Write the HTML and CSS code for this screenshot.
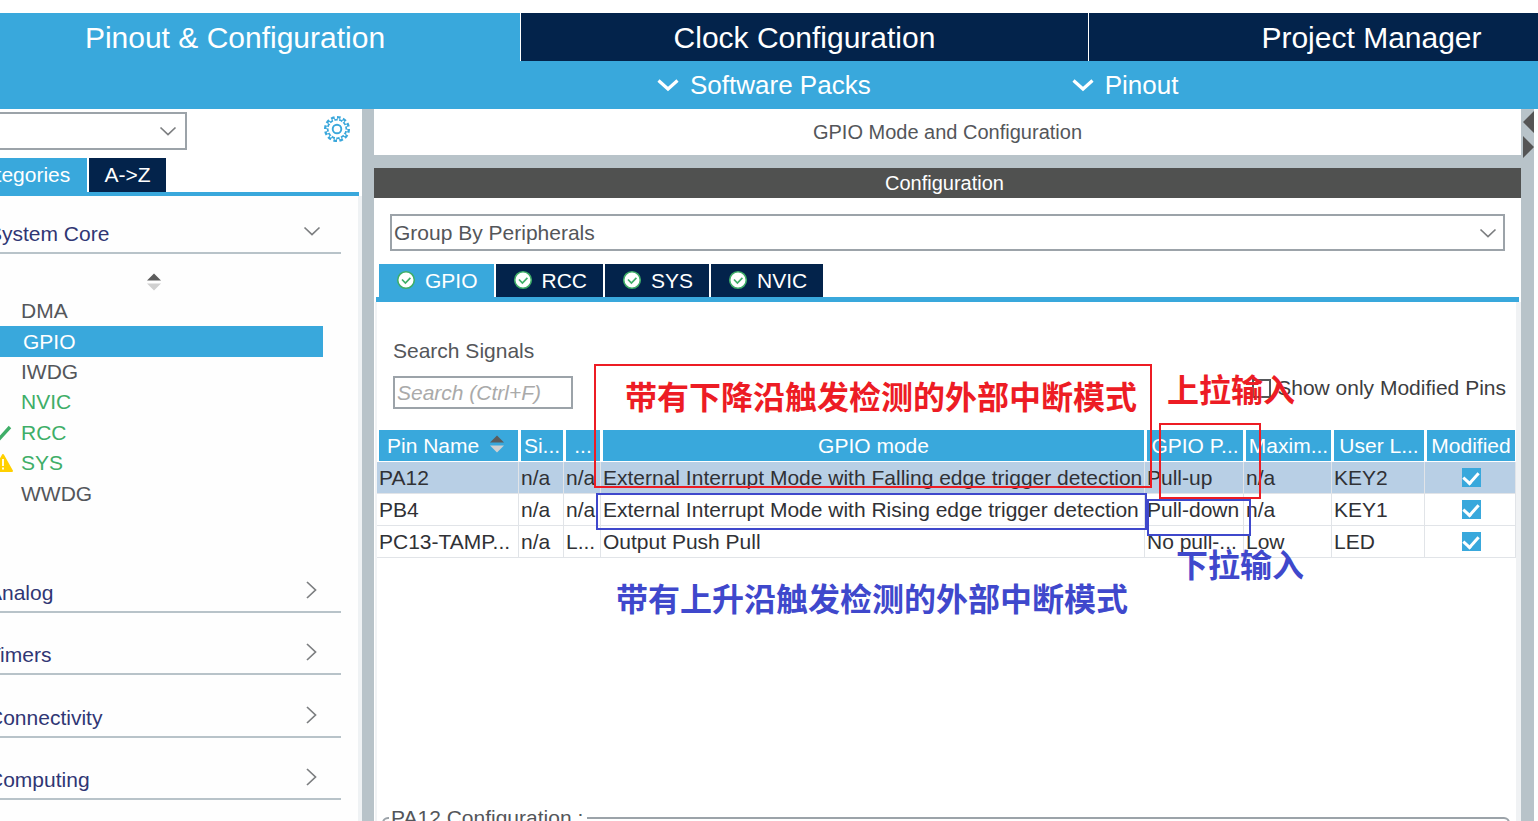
FILE: index.html
```html
<!DOCTYPE html>
<html lang="en">
<head>
<meta charset="utf-8">
<title>Pinout &amp; Configuration</title>
<link rel="stylesheet" href="styles.css">
</head>
<body>
<svg class="defs" aria-hidden="true">
  <symbol id="down" viewBox="0 0 18 18"><path d="M1.500 5.500l7.500 7 7.500-7" fill="none" stroke="currentColor" stroke-width="1.700"/></symbol>
  <symbol id="bold-down" viewBox="0 0 22 14"><path d="M1.500 2.500l9.500 8.500 9.500-8.500" fill="none" stroke="currentColor" stroke-width="3.2"/></symbol>
  <symbol id="right" viewBox="0 0 18 18"><path d="M4 1l8.500 8L4 17" fill="none" stroke="currentColor" stroke-width="1.700"/></symbol>
  <symbol id="ok" viewBox="0 0 20 20"><circle cx="10" cy="10" r="8.300" fill="#fff" stroke="#3fae68" stroke-width="1.600"/><path d="M6 9.500l3.400 3.600 5-5.300" fill="none" stroke="#3fae68" stroke-width="1.700"/></symbol>
  <symbol id="sort" viewBox="0 0 14 18"><path d="M0 7.500l7-7 7 7z" fill="#5c5c5c"/><path class="sort-low" d="M0 10.500h14l-7 7z"/></symbol>
</svg>
<div class="app">
  <nav class="main-tabs">
    <button class="main-tab first active">Pinout &amp; Configuration</button>
    <button class="main-tab">Clock Configuration</button>
    <button class="main-tab last">Project Manager</button>
  </nav>
  <div class="sub-bar">
    <button class="sub-item"><svg width="22" height="14"><use href="#bold-down"/></svg>Software Packs</button>
    <button class="sub-item"><svg width="22" height="14"><use href="#bold-down"/></svg>Pinout</button>
  </div>
  <div class="workspace">
    <aside class="sidebar">
      <div class="finder">
        <div class="combo finder-combo">
          <select aria-label="Find component"><option></option></select>
          <svg width="18" height="18"><use href="#down"/></svg>
        </div>
        <button class="gear" aria-label="Settings">
          <svg width="28" height="28" viewBox="-14 -14 28 28" fill="none" stroke="#3aa7db">
            <circle r="10.300" fill="#3aa7db" stroke="none"/>
            <circle r="11.300" stroke-width="3.400" pathLength="120" stroke-dasharray="6 4"/>
            <circle r="8.500" fill="#fff" stroke="none"/>
            <circle r="9.400" stroke="#fff" stroke-width="2.600" pathLength="120" stroke-dasharray="3 7" stroke-dashoffset="-1.500"/>
            <circle r="4.300" stroke-width="1.900"/>
          </svg>
        </button>
      </div>
      <div class="side-tabs">
        <button class="side-tab active">Categories</button>
        <button class="side-tab">A-&gt;Z</button>
      </div>
      <div class="side-body">
        <button class="category open">System Core<svg width="18" height="18"><use href="#down"/></svg></button>
        <div class="sort-row"><svg width="14" height="18"><use href="#sort"/></svg></div>
        <ul class="modules">
          <li>DMA</li>
          <li class="selected">GPIO</li>
          <li>IWDG</li>
          <li class="good">NVIC</li>
          <li class="good"><svg class="mark" width="20" height="18" viewBox="0 0 20 18"><path d="M2 9l5 6L18 3" fill="none" stroke="#3fae68" stroke-width="3.400"/></svg>RCC</li>
          <li class="good"><svg class="mark warn" width="20" height="18" viewBox="0 0 20 18"><path d="M10 1l9 16H1z" fill="#ffd000" stroke="#ffd000" stroke-width="2" stroke-linejoin="round"/><path d="M10 5v7M10 13.500v2" stroke="#fff" stroke-width="1.800"/></svg>SYS</li>
          <li>WWDG</li>
        </ul>
        <div class="categories">
          <button class="category">Analog<svg width="18" height="18"><use href="#right"/></svg></button>
          <button class="category">Timers<svg width="18" height="18"><use href="#right"/></svg></button>
          <button class="category">Connectivity<svg width="18" height="18"><use href="#right"/></svg></button>
          <button class="category">Computing<svg width="18" height="18"><use href="#right"/></svg></button>
        </div>
      </div>
    </aside>
    <main class="main">
      <h1 class="mode-title">GPIO Mode and Configuration</h1>
      <section class="config">
        <h2 class="config-title">Configuration</h2>
        <div class="combo group-combo">
          <select aria-label="Grouping"><option>Group By Peripherals</option></select>
          <svg width="18" height="18"><use href="#down"/></svg>
        </div>
        <div class="periph-tabs">
          <button class="periph-tab active"><svg width="20" height="20"><use href="#ok"/></svg>GPIO</button>
          <button class="periph-tab"><svg width="20" height="20"><use href="#ok"/></svg>RCC</button>
          <button class="periph-tab"><svg width="20" height="20"><use href="#ok"/></svg>SYS</button>
          <button class="periph-tab"><svg width="20" height="20"><use href="#ok"/></svg>NVIC</button>
        </div>
        <div class="pane">
          <div class="filters">
            <div class="search">
              <label for="q">Search Signals</label>
              <input id="q" type="text" placeholder="Search (Ctrl+F)">
            </div>
            <label class="only"><input type="checkbox">Show only Modified Pins</label>
          </div>
          <div class="table-area">
            <table>
              <colgroup><col class="c-pin"><col class="c-sig"><col class="c-out"><col><col class="c-pull"><col class="c-max"><col class="c-user"><col class="c-mod"></colgroup>
              <thead><tr>
                <th><span class="sorted">Pin Name<svg width="14" height="18"><use href="#sort"/></svg></span></th>
                <th>Si...</th><th>...</th><th>GPIO mode</th><th>GPIO P...</th><th>Maxim...</th><th>User L...</th><th>Modified</th>
              </tr></thead>
              <tbody>
                <tr class="picked"><td>PA12</td><td>n/a</td><td>n/a</td><td>External Interrupt Mode with Falling edge trigger detection</td><td>Pull-up</td><td>n/a</td><td>KEY2</td><td class="tick"><input type="checkbox" checked aria-label="PA12 modified"></td></tr>
                <tr><td>PB4</td><td>n/a</td><td>n/a</td><td>External Interrupt Mode with Rising edge trigger detection</td><td>Pull-down</td><td>n/a</td><td>KEY1</td><td class="tick"><input type="checkbox" checked aria-label="PB4 modified"></td></tr>
                <tr><td>PC13-TAMP...</td><td>n/a</td><td>L...</td><td>Output Push Pull</td><td>No pull-...</td><td>Low</td><td>LED</td><td class="tick"><input type="checkbox" checked aria-label="PC13 modified"></td></tr>
              </tbody>
            </table>
          </div>
          <fieldset class="details"><legend>PA12 Configuration :</legend></fieldset>
        </div>
      </section>
    </main>
    <div class="splitter">
      <svg width="12" height="50" viewBox="0 0 12 50" fill="#555"><path d="M11 2v22L0 13zM0 27v22l11-11z"/></svg>
    </div>
  </div>
  <div class="note-box red falling-box"></div>
  <div class="note-box blue rising-box"></div>
  <div class="note-box red up-box"></div>
  <div class="note-box blue down-box"></div>
  <p class="note red falling-note" lang="zh-CN">带有下降沿触发检测的外部中断模式</p>
  <p class="note red up-note" lang="zh-CN">上拉输入</p>
  <p class="note blue rising-note" lang="zh-CN">带有上升沿触发检测的外部中断模式</p>
  <p class="note blue down-note" lang="zh-CN">下拉输入</p>
</div>
</body>
</html>
```
FILE: styles.css
```css
:root {
  --sky: #39a8dc;
  --navy: #03234b;
  --slate: #b8c3c9;
  --ink: #54565a;
  --line: #9ca3a9;
}
* { box-sizing: border-box; }
body {
  margin: 0;
  font: 21px/24px "Liberation Sans", Arial, sans-serif;
  color: var(--ink);
  background: #fff;
}
button, input, select { font: inherit; color: inherit; border: 0; border-radius: 0; margin: 0; padding: 0; background: none; }
h1, h2, p, ul { margin: 0; padding: 0; font-weight: 400; }
svg { flex: none; }
.defs { position: absolute; width: 0; height: 0; }
.app { position: relative; display: flex; flex-direction: column; height: 100vh; overflow: hidden; padding-top: 13px; }

.main-tabs { display: grid; grid-template-columns: 520fr 567fr 449fr; gap: 1px; height: 48px; flex: none; }
.main-tab { background: var(--navy); color: #fff; font-size: 30px; line-height: 48px; padding-top: 1px; white-space: nowrap; }
.main-tab.active { background: var(--sky); }
.main-tab.first { padding-right: 50px; }
.main-tab.last { padding-left: 116px; }

.sub-bar { display: flex; gap: 201px; height: 48px; flex: none; padding-left: 657px; background: var(--sky); }
.sub-item { display: flex; align-items: center; gap: 11px; color: #fff; font-size: 26px; white-space: nowrap; }

.workspace { display: flex; flex: 1; min-height: 0; background: var(--slate); }
.sidebar { display: flex; flex-direction: column; flex: none; width: 362px; overflow: hidden; background: #fff; }
.finder { display: flex; justify-content: space-between; padding: 3px 11px 8px 0; }
.combo { display: grid; align-items: center; border: 2px solid var(--line); background: #fff; }
.combo select, .combo svg { grid-area: 1 / 1; }
.combo select { appearance: none; width: 100%; height: 100%; }
.combo svg { justify-self: end; margin-right: 6px; color: #7c7e80; pointer-events: none; }
.finder-combo { width: 189px; height: 38px; margin-left: -2px; }
.finder-combo svg { margin-right: 8px; }
.gear { width: 28px; height: 28px; margin-top: 3px; }
.gear svg { display: block; }
.side-tabs { display: flex; gap: 2px; margin-left: -40px; margin-right: 3px; border-bottom: 4px solid var(--sky); }
.side-tab { height: 34px; width: 77px; background: var(--navy); color: #fff; }
.side-tab.active { width: 127px; padding-right: 8px; background: var(--sky); }
.side-body { flex: 1; border-right: 4px solid #eff2f4; background: #fefefe; padding-right: 17px; }
.category { display: flex; justify-content: space-between; align-items: end; width: 100%; padding: 0 20px 6px 0; border-bottom: 2px solid var(--slate); color: #303674; text-align: left; text-indent: -12px; }
.category svg { margin-bottom: 6px; color: #7c7e80; }
.open { height: 58px; }
.sort-row { padding: 19px 0 5px 147px; height: 42px; }
.sort-row svg { display: block; }
.sort-low { fill: #d0d0d0; }
.modules { display: grid; grid-auto-rows: 1fr; height: 213px; margin-right: 18px; list-style: none; }
.modules li { display: flex; align-items: center; position: relative; padding-left: 21px; }
.modules .selected { background: var(--sky); color: #fff; padding-left: 23px; }
.modules .good { color: #3fae68; }
.mark { position: absolute; left: -8px; }
.mark.warn { left: -7px; }
.categories { display: grid; grid-auto-rows: 1fr; height: 250px; margin-top: 41px; }

.main { display: flex; flex-direction: column; gap: 13px; flex: 1; min-width: 0; margin-left: 12px; }
.mode-title { height: 46px; flex: none; background: #fff; font-size: 20px; line-height: 46px; text-align: center; }
.config { display: flex; flex-direction: column; flex: 1; min-height: 0; background: #fff; }
.config-title { background: #505150; color: #fff; font-size: 20px; line-height: 30px; text-align: center; padding-right: 6px; }
.group-combo { height: 37px; margin: 16px 16px 13px; flex: none; }
.group-combo select { padding-left: 2px; }
.periph-tabs { display: flex; gap: 2px; margin: 0 2px; padding-left: 3px; border-bottom: 5px solid var(--sky); }
.periph-tab { display: flex; align-items: center; gap: 9px; height: 33px; padding: 0 16px 0 17px; background: var(--navy); color: #fff; }
.periph-tab svg { margin-bottom: 1px; }
.periph-tab.active { background: var(--sky); }
.pane { display: flex; flex-direction: column; flex: 1; min-height: 0; overflow: hidden; margin-left: 1px; border-left: 2px solid #f1f3f5; border-right: 5px solid #f0f2f4; }
.filters { display: flex; justify-content: space-between; align-items: end; padding: 37px 10px 21px 16px; }
.search { display: grid; gap: 13px; }
.search input { width: 180px; height: 33px; padding: 0 2px; border: 2px solid var(--line); }
.search input::placeholder { color: #aaa; font-style: italic; opacity: 1; }
.only { display: flex; align-items: center; gap: 6px; color: #3c3d40; padding-bottom: 9px; }
.only input { appearance: none; width: 19px; height: 19px; border: 2px solid #55575a; background: #fff; }

.table-area { flex: 1; min-height: 0; }
table { width: 100%; table-layout: fixed; border-collapse: separate; border-spacing: 0; color: #303135; white-space: nowrap; }
.c-pin { width: 142px; }
.c-sig { width: 45px; }
.c-out { width: 37px; }
.c-pull { width: 99px; }
.c-max { width: 88px; }
.c-user { width: 93px; }
.c-mod { width: 91px; }
th { height: 32px; padding: 0; border: solid #fff; border-width: 0 1px 1px 2px; background: var(--sky); color: #fff; font-weight: 400; }
.sorted { display: flex; align-items: center; gap: 11px; padding-left: 8px; }
.sorted svg { margin-bottom: 4px; }
.sorted .sort-low { fill: #5597b8; }
td { height: 32px; padding: 0 0 0 2px; border: solid #e1e4e8; border-width: 0 1px 1px 0; }
.picked td { background: #b8cfe5; }
.tick { text-align: center; line-height: 0; }
.tick input { appearance: none; display: inline-grid; place-items: center; width: 19px; height: 19px; padding-bottom: 3px; background: var(--sky); vertical-align: middle; }
.tick input::after { content: ""; width: 7px; height: 12px; border: solid #fff; border-width: 0 3px 3px 0; transform: rotate(42deg); }
.details { flex: none; height: 60px; margin: 0 6px -45px 5px; padding: 0; border: 2px solid var(--line); border-radius: 6px; }
.details legend { margin-left: 5px; padding: 0 4px 0 2px; }

.splitter { display: flex; flex: none; width: 17px; border-right: 4px solid #fff; padding-left: 2px; }

.note-box { position: absolute; border: 2px solid; pointer-events: none; }
.note { position: absolute; font: 700 32px/40px "Noto Sans CJK SC", sans-serif; white-space: nowrap; pointer-events: none; }
.red { color: #ed1c24; }
.blue { color: #3f48cc; }
.falling-box { left: 594px; top: 364px; width: 558px; height: 124px; }
.rising-box { left: 596px; top: 493px; width: 551px; height: 37px; }
.up-box { left: 1159px; top: 423px; width: 102px; height: 76px; }
.down-box { left: 1147px; top: 499px; width: 104px; height: 37px; }
.falling-note { left: 625px; top: 375px; }
.up-note { left: 1167px; top: 368px; }
.rising-note { left: 616px; top: 577px; }
.down-note { left: 1176px; top: 543px; }
```
